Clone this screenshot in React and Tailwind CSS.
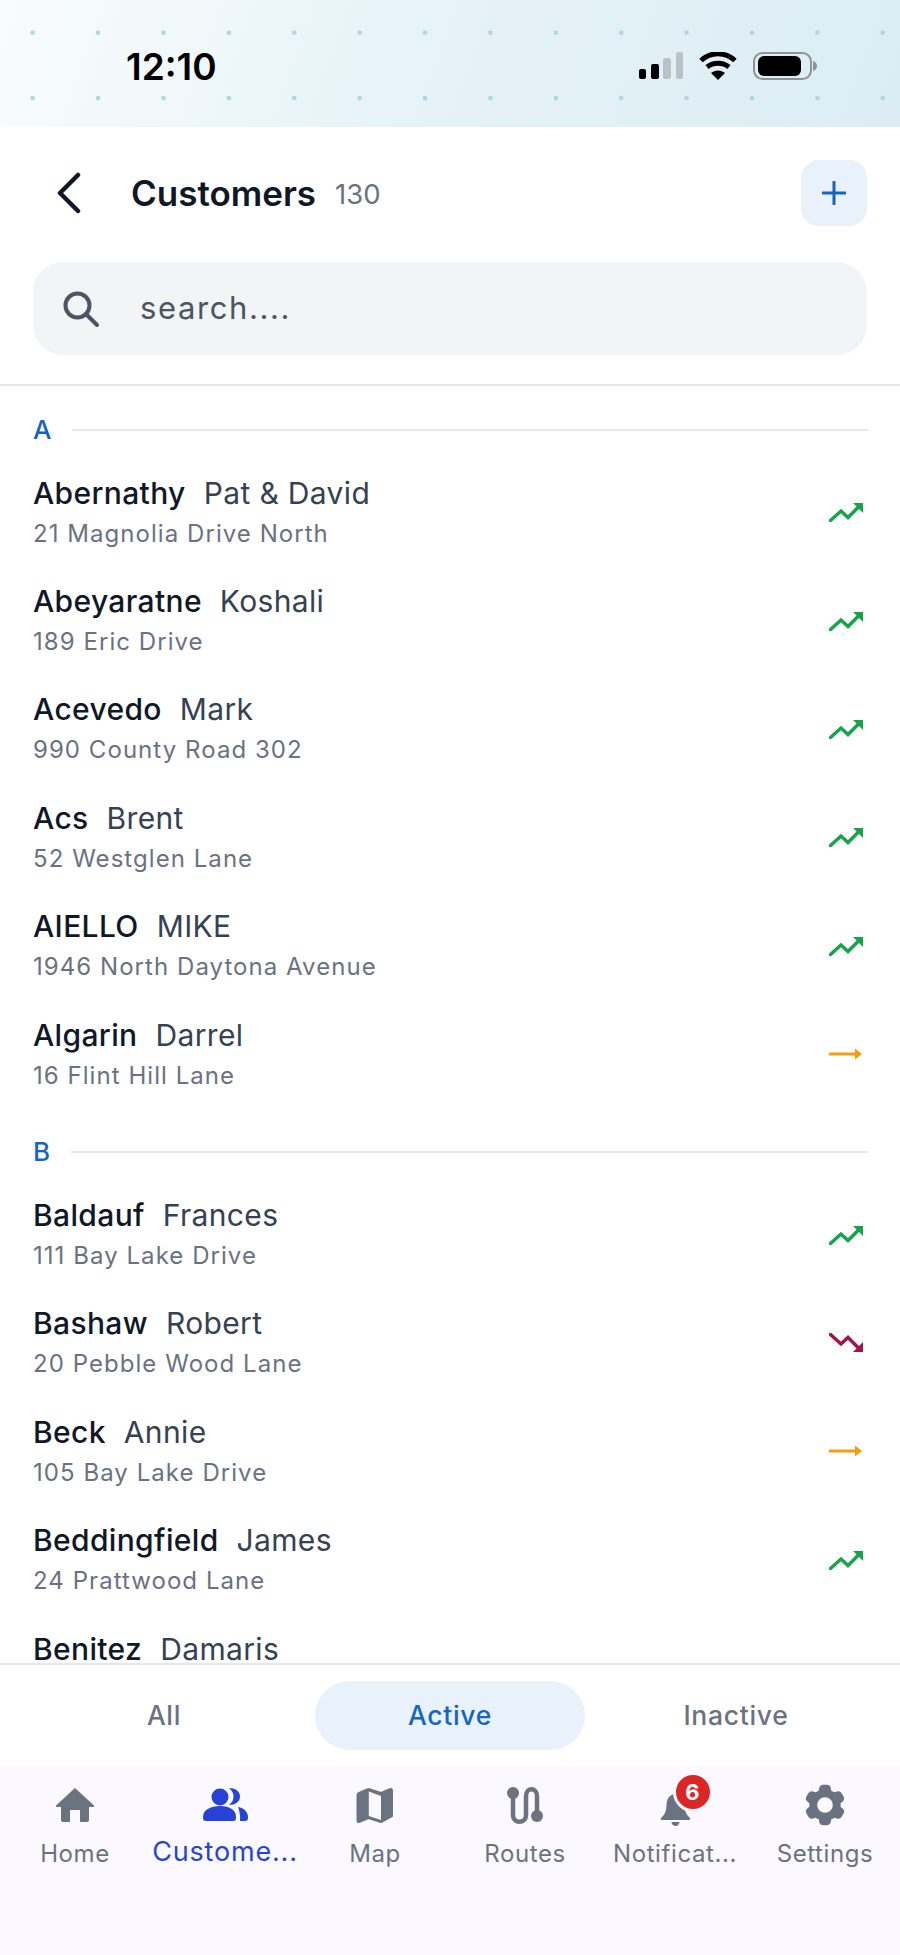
import { HiCog6Tooth } from "react-icons/hi2";

const sections = [
  {
    letter: "A",
    rows: [
      ["Abernathy", "Pat & David", "21 Magnolia Drive North", "up"],
      ["Abeyaratne", "Koshali", "189 Eric Drive", "up"],
      ["Acevedo", "Mark", "990 County Road 302", "up"],
      ["Acs", "Brent", "52 Westglen Lane", "up"],
      ["AIELLO", "MIKE", "1946 North Daytona Avenue", "up"],
      ["Algarin", "Darrel", "16 Flint Hill Lane", "flat"],
    ],
  },
  {
    letter: "B",
    rows: [
      ["Baldauf", "Frances", "111 Bay Lake Drive", "up"],
      ["Bashaw", "Robert", "20 Pebble Wood Lane", "down"],
      ["Beck", "Annie", "105 Bay Lake Drive", "flat"],
      ["Beddingfield", "James", "24 Prattwood Lane", "up"],
      ["Benitez", "Damaris", "", ""],
    ],
  },
];

function Trend({ kind }) {
  if (!kind) return null;
  if (kind === "flat") {
    return (
      <svg width="34" height="12" viewBox="0 0 34 12" fill="#f59e0b">
        <path d="M1 6h26" stroke="#f59e0b" strokeWidth="3" strokeLinecap="round" />
        <path d="M26 .5 33 6l-7 5.500z" />
      </svg>
    );
  }
  const color = kind === "up" ? "#16a34a" : "#a3134f";
  return (
    <svg width="34" height="20" viewBox="0 0 34 20" fill={color} className={kind === "down" ? "-scale-y-100" : ""}>
      <path d="M1.500 18.500 12 9l7 6.500L30 4.500" fill="none" stroke={color} strokeWidth="3.500" strokeLinecap="round" />
      <path d="M24 1h10v10z" />
    </svg>
  );
}

function Row({ row }) {
  const [last, first, address, trend] = row;
  return (
    <div className="h-[108.4px] flex items-center justify-between pl-[33px] pr-[37px]">
      <div className="flex flex-col">
        <div className="flex gap-[18px] text-[30px] leading-[44px] tracking-[0.35px] -mt-[1px]">
          <span className="text-gray-900 font-medium">{last}</span>
          <span className="text-gray-700">{first}</span>
        </div>
        <div className="h-[38px] text-[24px] leading-[38px] text-gray-500 tracking-[1.05px]">{address}</div>
      </div>
      <Trend kind={trend} />
    </div>
  );
}

function StatusIcons() {
  return (
    <svg width="178" height="28" viewBox="0 0 178 28" className="mr-[83px] mt-[5px]">
      <rect x="0" y="17" width="7" height="10" rx="2" fill="#000" />
      <rect x="12" y="12" width="8" height="15" rx="2" fill="#000" />
      <rect x="24" y="6" width="8" height="21" rx="2" fill="#b6c4ca" />
      <rect x="37" y="0" width="7" height="27" rx="2" fill="#b6c4ca" />
      <path d="M62 8.500c10-9 24-9 34 0" fill="none" stroke="#000" strokeWidth="5" />
      <path d="M68 15c6.500-5 15.500-5 22 0" fill="none" stroke="#000" strokeWidth="5" />
      <path d="M72 21c4-3.500 10-3.500 14 0l-7 7z" fill="#000" />
      <rect x="115" y="1" width="57" height="26" rx="8.500" fill="none" stroke="#8b9599" strokeWidth="2" />
      <rect x="119" y="4" width="43" height="20" rx="6" fill="#000" />
      <path d="M174 9c2.500.5 4 2.500 4 5s-1.500 4.500-4 5z" fill="#8b9599" />
    </svg>
  );
}

function NavItem({ label, active, children }) {
  return (
    <div className="flex flex-col items-center">
      <div className="h-[44px] flex items-center justify-center relative">{children}</div>
      <div
        className={
          active
            ? "mt-[7px] text-[27px] leading-[36px] tracking-[0.8px] text-[#2743d6] w-[148px] text-center"
            : "mt-[9px] text-[24px] leading-[36px] tracking-[0.6px] text-gray-500 w-[148px] text-center"
        }
      >
        {label}
      </div>
    </div>
  );
}

export default function App() {
  return (
    <div className="w-[900px] h-[1955px] flex flex-col bg-white overflow-hidden font-['Inter',sans-serif]">
      <div className="h-[127px] shrink-0 flex items-center justify-between bg-[radial-gradient(circle,#a9d7e5_2px,transparent_2.6px),linear-gradient(110deg,#f9fcfc_0%,#e6f3f8_45%,#dbedf3_100%)] bg-size-[65.4px_65.4px,100%_100%]">
        <div className="ml-[126px] mt-[6px] text-[37px] font-semibold text-black">12:10</div>
        <StatusIcons />
      </div>

      <div className="shrink-0 px-[33px] pt-[33px] pb-[29px] border-b-2 border-gray-200">
        <div className="h-[66px] flex items-center">
          <svg width="26" height="42" viewBox="0 0 26 42" fill="none" stroke="#111827" strokeWidth="4.500" strokeLinecap="round" strokeLinejoin="round" className="ml-[23px]">
            <path d="M22 3 4 21l18 18" />
          </svg>
          <div className="ml-[49px] text-[35px] font-semibold text-gray-900">Customers</div>
          <div className="ml-[19px] mt-[4px] text-[27.5px] text-gray-500">130</div>
          <div className="ml-auto w-[66px] h-[66px] rounded-[18px] bg-[#e9f1fb] flex items-center justify-center">
            <svg width="24" height="24" viewBox="0 0 24 24" fill="none" stroke="#1565c0" strokeWidth="3" strokeLinecap="round">
              <path d="M12 1v22M1 12h22" />
            </svg>
          </div>
        </div>
        <div className="mt-[36px] h-[93px] rounded-[30px] bg-gray-100 flex items-center pl-[30px]">
          <svg width="36" height="36" viewBox="0 0 36 36" fill="none" stroke="#4b5563" strokeWidth="4" strokeLinecap="round">
            <circle cx="14.500" cy="14.500" r="12" />
            <path d="M23 23l11 11" />
          </svg>
          <div className="ml-[41px] text-[31px] tracking-[1.6px] text-gray-600">search....</div>
        </div>
      </div>

      <div className="flex-1 overflow-hidden">
        {sections.map((section) => (
          <div key={section.letter}>
            <div className="h-[72px] pt-[15px] pl-[33px] pr-[32px] flex items-center gap-[21px]">
              <span className="text-[26px] font-medium text-[#1565c0]">{section.letter}</span>
              <div className="flex-1 h-[2px] bg-gray-200" />
            </div>
            {section.rows.map((row) => (
              <Row key={row[0]} row={row} />
            ))}
          </div>
        ))}
      </div>

      <div className="h-[103px] shrink-0 border-t-2 border-gray-200 bg-white grid grid-cols-3 px-[21px] pt-[16px] pb-[16px] text-[26.5px] font-medium tracking-[0.7px] text-center">
        <div className="flex items-center justify-center text-gray-500">All</div>
        <div className="mx-[8px] rounded-full bg-[#e9f1fb] flex items-center justify-center text-[#1565c0]">Active</div>
        <div className="flex items-center justify-center text-gray-500">Inactive</div>
      </div>

      <div className="h-[189px] shrink-0 bg-[#fbf9ff] grid grid-cols-6 pt-[17px]">
        <NavItem label="Home">
          <svg width="38" height="34" viewBox="0 0 38 34" fill="#6b7280">
            <path d="M19 0 38 17.500c.3.800 0 1.500-1 1.500h-4v13c0 1.200-.8 2-2 2h-6c-.7 0-1-.4-1-1V22h-10v11c0 .6-.3 1-1 1H7c-1.200 0-2-.8-2-2V19H1c-1 0-1.300-.7-1-1.500z" />
          </svg>
        </NavItem>
        <NavItem label="Custome..." active>
          <svg width="45" height="34" viewBox="0 0 45 34" fill="#2743d6">
            <circle cx="17" cy="9" r="8.500" />
            <path d="M0 29c0-7 7-11 17-11s16 4 16 11v1c0 2-1 3-3 3H3c-2 0-3-1-3-3z" />
            <path d="M26 0c6 0 11 3 11 8.500S32 17 26 17c3-2.500 4.500-5 4.500-8.500S29 2.500 26 0z" />
            <path d="M35 19c6 1 10 5 10 10v1c0 2-1 3-3 3h-5c.5-5-.5-10-2-14z" />
          </svg>
        </NavItem>
        <NavItem label="Map">
          <svg width="38" height="37" viewBox="0 0 38 37" fill="#6b7280" fillRule="evenodd">
            <path d="M3 6 12.500 2 25 6l9.500-4c.8 0 1.500.5 1.500 1.500V29l-11 6-12.500-4L3 35c-1 .3-1.500-.5-1.500-1.500V8C1.500 7 2 6.400 3 6zM12.500 4v25L25 33V9z" stroke="#6b7280" strokeWidth="2" strokeLinejoin="round" />
            <path d="M12.800 4.500 25 9v24l-12.200-4z" fill="#fbf9ff" />
          </svg>
        </NavItem>
        <NavItem label="Routes">
          <svg width="36" height="37" viewBox="0 0 36 37" fill="none" stroke="#6b7280" strokeWidth="4.500" strokeLinecap="round">
            <path d="M6 6v22c0 9 13 9 13 0V9c0-9 11-9 11 0v20" />
            <circle cx="6" cy="6" r="6" fill="#6b7280" stroke="none" />
            <circle cx="30" cy="29" r="6" fill="#6b7280" stroke="none" />
          </svg>
        </NavItem>
        <NavItem label="Notificat...">
          <svg width="31" height="33" viewBox="0 0 31 33" fill="#6b7280" className="mt-[9px]">
            <path d="M15.500 1c-6 0-9 5-9 11 0 6-2 10-5.500 13-.7 1 0 2 1 2h27c1 0 1.700-1 1-2-3.500-3-5.500-7-5.500-13 0-6-3-11-9-11z" />
            <path d="M11.500 29h8c0 2-1.800 4-4 4s-4-2-4-4z" />
          </svg>
          <div className="absolute top-[-11px] left-[13px] w-[40px] h-[40px] rounded-full bg-[#dc2626] border-[3px] border-[#fbf9ff] flex items-center justify-center text-white text-[22px] font-bold">
            6
          </div>
        </NavItem>
        <NavItem label="Settings">
          <HiCog6Tooth className="text-gray-500 w-[50px] h-[50px]" />
        </NavItem>
      </div>
    </div>
  );
}
